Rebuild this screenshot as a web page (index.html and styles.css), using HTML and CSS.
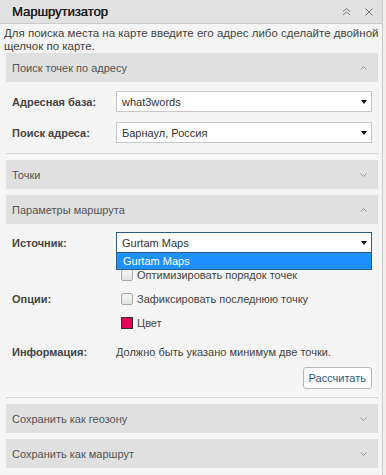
FILE: index.html
```html
<!DOCTYPE html>
<html lang="ru">
<head>
  <meta charset="UTF-8" />
  <title>Маршрутизатор</title>
  <link rel="stylesheet" href="styles.css">
</head>
<body>
  <div class="panel">
    <div class="panel-head">
      <div class="panel-title">Маршрутизатор</div>
      <div class="panel-tools">
        <svg width="9" height="9" viewBox="0 0 9 9"><path d="M1 4.5 L4.5 1.5 L8 4.5 M1 8 L4.5 5 L8 8" fill="none" stroke="#777" stroke-width="1"/></svg>
        <svg width="8" height="8" viewBox="0 0 8 8"><path d="M0.5 0.5 L7.5 7.5 M7.5 0.5 L0.5 7.5" fill="none" stroke="#777" stroke-width="1"/></svg>
      </div>
    </div>

    <div class="hint">Для поиска места на карте введите его адрес либо сделайте двойной щелчок по карте.</div>

    <!-- Поиск точек по адресу -->
    <div class="section">
      <div class="section-head">
        <span>Поиск точек по адресу</span>
        <svg class="chev" viewBox="0 0 7 4"><path d="M0.5 3.5 L3.5 0.5 L6.5 3.5" fill="none" stroke="#999" stroke-width="1"/></svg>
      </div>
      <div class="section-body">
        <div class="row">
          <label>Адресная база:</label>
          <div class="select"><span>what3words</span><i class="caret"></i></div>
        </div>
        <div class="row">
          <label>Поиск адреса:</label>
          <div class="select"><span>Барнаул, Россия</span><i class="caret"></i></div>
        </div>
      </div>
    </div>

    <div class="section">
      <div class="section-head">
        <span>Точки</span>
        <svg class="chev" viewBox="0 0 7 4"><path d="M0.5 0.5 L3.5 3.5 L6.5 0.5" fill="none" stroke="#999" stroke-width="1"/></svg>
      </div>
    </div>

    <!-- Параметры маршрута -->
    <div class="section">
      <div class="section-head">
        <span>Параметры маршрута</span>
        <svg class="chev" viewBox="0 0 7 4"><path d="M0.5 3.5 L3.5 0.5 L6.5 3.5" fill="none" stroke="#999" stroke-width="1"/></svg>
      </div>
      <div class="section-body params">
        <div class="row">
          <label>Источник:</label>
          <div class="select open">
            <span>Gurtam Maps</span><i class="caret"></i>
            <div class="dropdown">Gurtam Maps</div>
          </div>
        </div>
        <div class="row options">
          <label>Опции:</label>
          <div class="opt-list">
            <div class="opt"><i class="check"></i>Оптимизировать порядок точек</div>
            <div class="opt"><i class="check"></i>Зафиксировать последнюю точку</div>
            <div class="opt"><i class="swatch"></i>Цвет</div>
          </div>
        </div>
        <div class="row info">
          <label>Информация:</label>
          <div class="info-text">Должно быть указано минимум две точки.</div>
        </div>
        <div class="actions">
          <button class="btn">Рассчитать</button>
        </div>
      </div>
    </div>

    <div class="section">
      <div class="section-head">
        <span>Сохранить как геозону</span>
        <svg class="chev" viewBox="0 0 7 4"><path d="M0.5 0.5 L3.5 3.5 L6.5 0.5" fill="none" stroke="#999" stroke-width="1"/></svg>
      </div>
    </div>
    <div class="section">
      <div class="section-head">
        <span>Сохранить как маршрут</span>
        <svg class="chev" viewBox="0 0 7 4"><path d="M0.5 0.5 L3.5 3.5 L6.5 0.5" fill="none" stroke="#999" stroke-width="1"/></svg>
      </div>
    </div>
  </div>
</body>
</html>
```

FILE: styles.css
```css
body {
  margin: 0;
  background: #f2efe8;
  font-family: 'Liberation Sans', Arial, sans-serif;
  color: #333;
}

.panel {
  width: 382px;
  height: 475px;
  background: #f5f5f5;
  border-right: 1px solid #cdcdcd;
  overflow: hidden;
}

.panel-head {
  height: 23px;
  background: #e1e1e1;
  border-bottom: 1px solid #cacaca;
  display: flex;
  align-items: center;
  justify-content: space-between;
  padding: 0 9px 0 12px;
}

.panel-title {
  font-size: 13px;
  color: #1a1a1a;
  text-shadow: 0.35px 0 0 #1a1a1a;
}

.panel-tools {
  display: flex;
  align-items: center;
  gap: 14px;
}

.hint {
  font-size: 11.5px;
  line-height: 13px;
  color: #444;
  padding: 3px 2px 0 4px;
  height: 26px;
}

.section {
  margin: 0 4px 6px 6px;
}

.section-head {
  height: 29px;
  background: #e0e0e0;
  display: flex;
  align-items: center;
  justify-content: space-between;
  padding: 0 11px 0 6px;
  font-size: 11px;
  color: #555;
}

.chev {
  width: 7px;
  height: 4px;
}

.section-body {
  padding: 9px 0 10px 0;
  border-bottom: 1px solid #d6d6d6;
}

.section-body.params {
  padding: 8px 0 8px 0;
}

.row {
  display: flex;
  align-items: center;
  padding-left: 6px;
  margin-bottom: 10px;
}

.row:last-child {
  margin-bottom: 0;
}

.row label {
  width: 104px;
  font-size: 11px;
  font-weight: bold;
  color: #444;
}

.select {
  position: relative;
  flex: 1;
  height: 21px;
  box-sizing: border-box;
  margin-right: 6px;
  background: #fff;
  border: 1px solid #c8c8c8;
  display: flex;
  align-items: center;
  justify-content: space-between;
  padding: 0 4px 0 5px;
  font-size: 11px;
  color: #333;
}

.select.open {
  border-color: #2d5f86;
}

.caret {
  width: 0;
  height: 0;
  border-left: 3.5px solid transparent;
  border-right: 3.5px solid transparent;
  border-top: 4px solid #111;
}

.dropdown {
  position: absolute;
  left: -1px;
  right: -1px;
  top: 20px;
  height: 16px;
  background: #1e90ff;
  border: 1px solid #2d5f86;
  border-top: none;
  color: #fff;
  font-size: 11px;
  line-height: 16px;
  padding-left: 6px;
  z-index: 2;
}

.options {
  margin-bottom: 9px;
}

.opt-list {
  display: flex;
  flex-direction: column;
  padding-left: 5px;
}

.opt {
  display: flex;
  align-items: center;
  height: 24px;
  font-size: 11px;
  color: #444;
}

.check {
  width: 12px;
  height: 12px;
  box-sizing: border-box;
  border: 1px solid #aaa;
  border-radius: 2px;
  background: linear-gradient(#f6f6f6, #e2e2e2);
  margin-right: 4px;
}

.swatch {
  width: 12px;
  height: 12px;
  box-sizing: border-box;
  border: 1px solid #333;
  background: #e8005a;
  margin-right: 4px;
}

.info {
  height: 16px;
  margin-bottom: 7px;
}

.info-text {
  font-size: 11px;
  color: #444;
}

.actions {
  display: flex;
  justify-content: flex-end;
  padding-right: 6px;
}

.btn {
  background: #fff;
  border: 1px solid #b8b8b8;
  border-radius: 3px;
  font-family: inherit;
  font-size: 11px;
  color: #1f5c85;
  height: 22px;
  padding: 0 5px;
}
```
